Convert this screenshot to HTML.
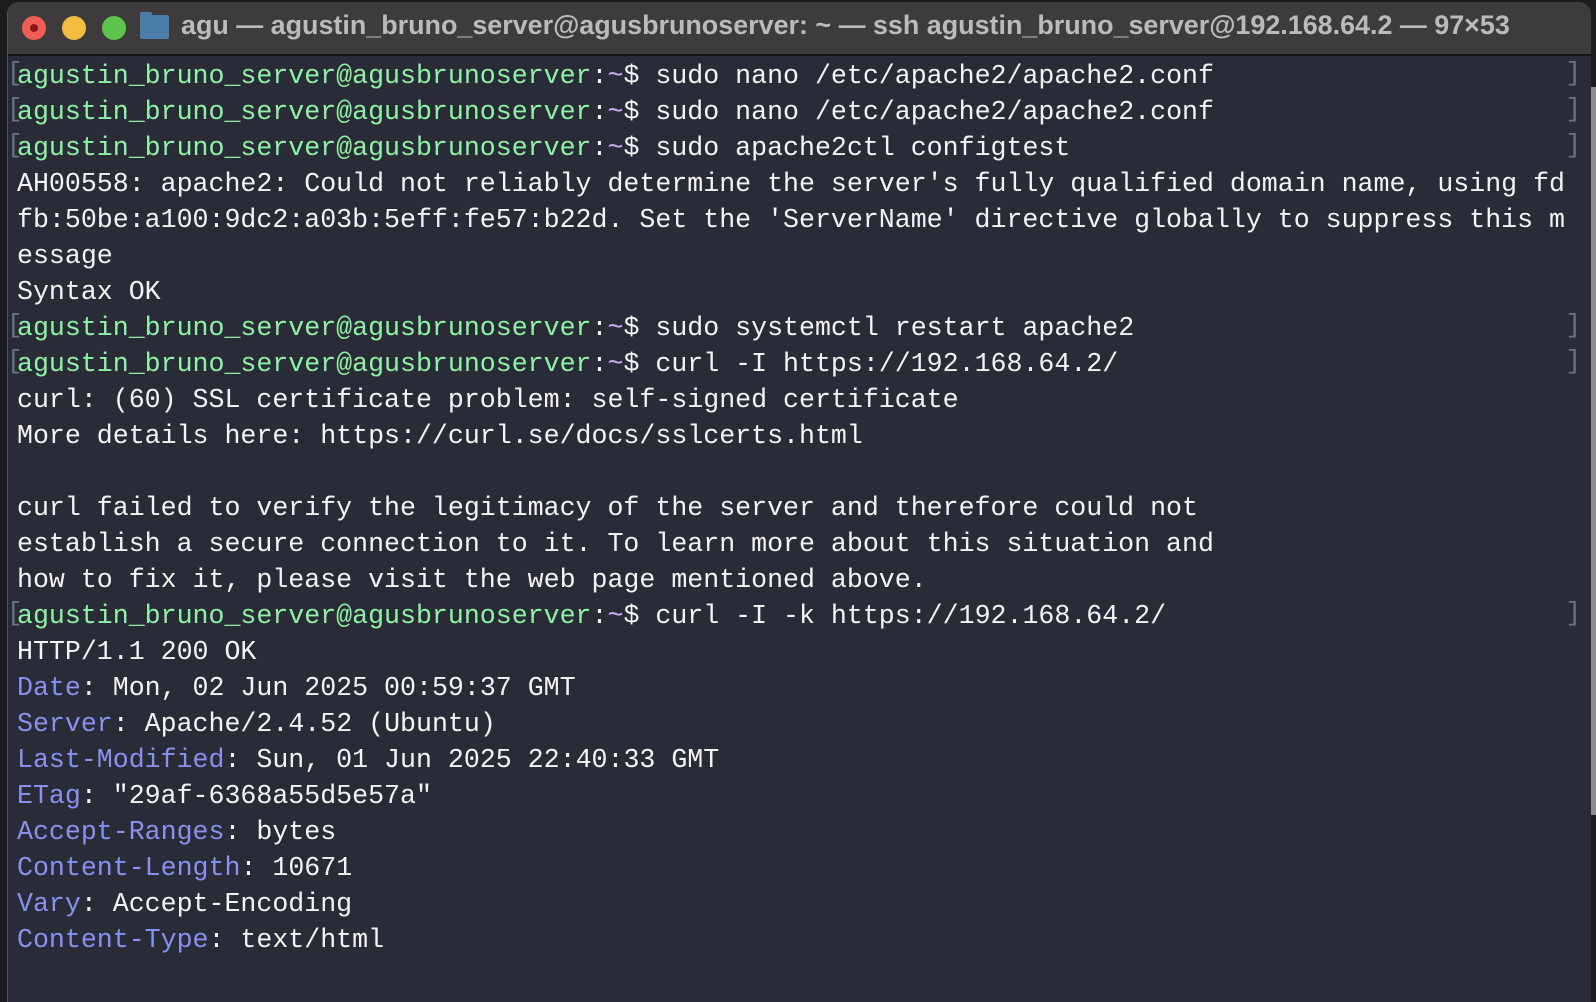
<!DOCTYPE html>
<html><head><meta charset="utf-8"><style>
html,body{margin:0;padding:0;width:1596px;height:992px;overflow:hidden;background:#1c1c1e;}
#win{position:absolute;left:7px;top:2px;width:1583px;height:1000px;background:#292b36;border-radius:12px 12px 0 0;overflow:hidden;border-left:1px solid #555;}
#tb{position:absolute;left:0;top:0;right:0;height:52px;background:#3d3b3b;border-bottom:2px solid #151515;}
.dot{position:absolute;top:14px;width:24px;height:24px;border-radius:50%;}
#title{position:absolute;left:173px;top:8px;font:bold 26.9px "Liberation Sans",sans-serif;color:#bdbbba;white-space:nowrap;}
#term{position:absolute;left:9px;top:56px;font:26.6px/36px "Liberation Mono",monospace;color:#f4f4f4;white-space:pre;}
.g{color:#8ef2a6}.p{color:#c9b2f7}.b{color:#8a90f0}
.lb{position:absolute;left:-1px;font:26px "Liberation Mono",monospace;color:#6d7189;}
.rb{position:absolute;right:10px;font:26px "Liberation Mono",monospace;color:#6d7189;}
#sb{position:absolute;left:1591px;top:87px;width:5px;height:728px;background:#8c8c8c;}
</style></head><body>
<div id="win">
<div id="tb">
<div class="dot" style="left:14px;background:#ee5e54"><div style="position:absolute;left:8px;top:8px;width:8px;height:8px;border-radius:50%;background:#8c1a12"></div></div>
<div class="dot" style="left:54px;background:#f4bd42"></div>
<div class="dot" style="left:94px;background:#5ec44c"></div>
<div style="position:absolute;left:132px;top:13px;width:29px;height:24px;background:#4a7ea8;border-radius:2px"><div style="position:absolute;left:0;top:-3px;width:12px;height:5px;background:#4a7ea8;border-radius:2px 2px 0 0"></div></div>
<div id="title">agu — agustin_bruno_server@agusbrunoserver: ~ — ssh agustin_bruno_server@192.168.64.2 — 97×53</div>
</div>
<div id="term"><span class="g">agustin_bruno_server@agusbrunoserver</span>:<span class="p">~</span>$ sudo nano /etc/apache2/apache2.conf
<span class="g">agustin_bruno_server@agusbrunoserver</span>:<span class="p">~</span>$ sudo nano /etc/apache2/apache2.conf
<span class="g">agustin_bruno_server@agusbrunoserver</span>:<span class="p">~</span>$ sudo apache2ctl configtest
AH00558: apache2: Could not reliably determine the server's fully qualified domain name, using fd
fb:50be:a100:9dc2:a03b:5eff:fe57:b22d. Set the 'ServerName' directive globally to suppress this m
essage
Syntax OK
<span class="g">agustin_bruno_server@agusbrunoserver</span>:<span class="p">~</span>$ sudo systemctl restart apache2
<span class="g">agustin_bruno_server@agusbrunoserver</span>:<span class="p">~</span>$ curl -I https://192.168.64.2/
curl: (60) SSL certificate problem: self-signed certificate
More details here: https://curl.se/docs/sslcerts.html

curl failed to verify the legitimacy of the server and therefore could not
establish a secure connection to it. To learn more about this situation and
how to fix it, please visit the web page mentioned above.
<span class="g">agustin_bruno_server@agusbrunoserver</span>:<span class="p">~</span>$ curl -I -k https://192.168.64.2/
HTTP/1.1 200 OK
<span class="b">Date</span>: Mon, 02 Jun 2025 00:59:37 GMT
<span class="b">Server</span>: Apache/2.4.52 (Ubuntu)
<span class="b">Last-Modified</span>: Sun, 01 Jun 2025 22:40:33 GMT
<span class="b">ETag</span>: "29af-6368a55d5e57a"
<span class="b">Accept-Ranges</span>: bytes
<span class="b">Content-Length</span>: 10671
<span class="b">Vary</span>: Accept-Encoding
<span class="b">Content-Type</span>: text/html</div>
<div class="lb" style="top:56px">[</div>
<div class="lb" style="top:92px">[</div>
<div class="lb" style="top:128px">[</div>
<div class="lb" style="top:308px">[</div>
<div class="lb" style="top:344px">[</div>
<div class="lb" style="top:596px">[</div>
<div class="rb" style="top:56px">]</div>
<div class="rb" style="top:92px">]</div>
<div class="rb" style="top:128px">]</div>
<div class="rb" style="top:308px">]</div>
<div class="rb" style="top:344px">]</div>
<div class="rb" style="top:596px">]</div>
</div>
<div id="sb"></div>
</body></html>
